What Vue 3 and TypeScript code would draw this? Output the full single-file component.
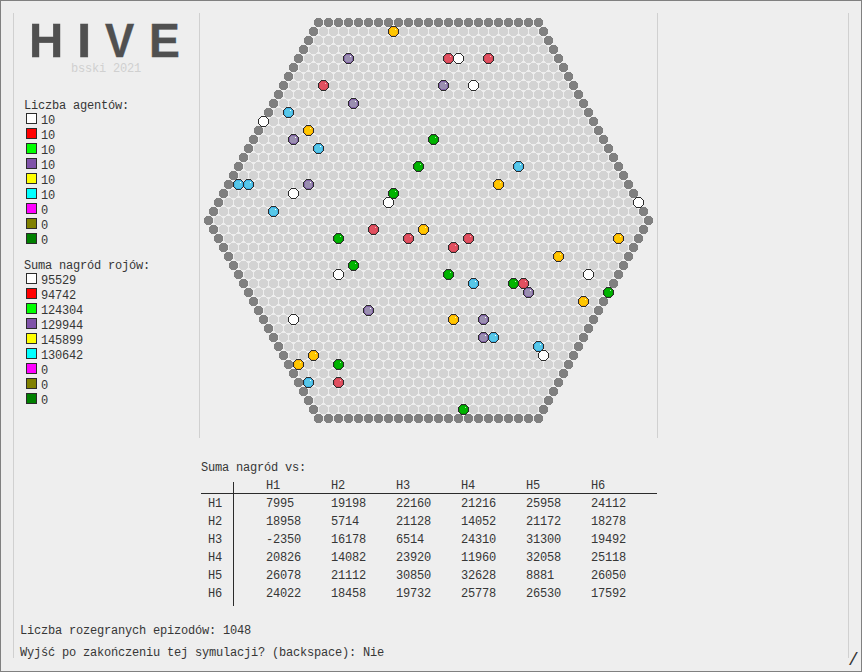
<script setup lang="ts">
interface Swarm {
  color: string
  agents: number
  reward: number
}

interface AgentGroup {
  fill: string
  rim: string
  shine: string
  cells: [number, number][]
}

const swarms: Swarm[] = [
  { color: '#ffffff', agents: 10, reward: 95529 },
  { color: '#ff0000', agents: 10, reward: 94742 },
  { color: '#00ff00', agents: 10, reward: 124304 },
  { color: '#7f52a8', agents: 10, reward: 129944 },
  { color: '#ffff00', agents: 10, reward: 145899 },
  { color: '#00ffff', agents: 10, reward: 130642 },
  { color: '#ff00ff', agents: 0, reward: 0 },
  { color: '#808000', agents: 0, reward: 0 },
  { color: '#008000', agents: 0, reward: 0 },
]

const names = ['H1', 'H2', 'H3', 'H4', 'H5', 'H6']
const matrix: number[][] = [
  [7995, 19198, 22160, 21216, 25958, 24112],
  [18958, 5714, 21128, 14052, 21172, 18278],
  [-2350, 16178, 6514, 24310, 31300, 19492],
  [20826, 14082, 23920, 11960, 32058, 25118],
  [26078, 21112, 30850, 32628, 8881, 26050],
  [24022, 18458, 19732, 25778, 26530, 17592],
]

// The board is a hexagon with 23 cells on each side: 45 rows, 10px by 9px pitch.
const side = 22
const floor: { x: number; y: number }[] = []
const walls: { x: number; y: number }[] = []
for (let row = 0; row <= side * 2; row++) {
  const grow = side - Math.abs(side - row)
  const count = side + 1 + grow
  for (let i = 0; i < count; i++) {
    const cell = { x: 318 - grow * 5 + i * 10, y: 22 + row * 9 }
    const edge = row === 0 || row === side * 2 || i === 0 || i === count - 1
    ;(edge ? walls : floor).push(cell)
  }
}

const groups: AgentGroup[] = [
  { fill: '#ffffff', rim: '#ffffff', shine: '#ffffff', cells: [[458, 58], [473, 85], [263, 121], [293, 193], [388, 202], [638, 202], [338, 274], [588, 274], [293, 319], [543, 355]] },
  { fill: '#e05060', rim: '#d04454', shine: '#f8b8c0', cells: [[448, 58], [488, 58], [323, 85], [373, 229], [408, 238], [468, 238], [453, 247], [523, 283], [338, 382]] },
  { fill: '#00b400', rim: '#009c00', shine: '#b0f0b0', cells: [[433, 139], [418, 166], [393, 193], [338, 238], [353, 265], [448, 274], [513, 283], [608, 292], [338, 364], [463, 409]] },
  { fill: '#9a8fb0', rim: '#8060a4', shine: '#ffffff', cells: [[348, 58], [443, 85], [353, 103], [293, 139], [308, 184], [528, 292], [368, 310], [483, 319], [483, 337]] },
  { fill: '#ffc800', rim: '#f8ac00', shine: '#fff4b0', cells: [[393, 31], [308, 130], [498, 184], [423, 229], [618, 238], [558, 256], [583, 301], [453, 319], [313, 355], [298, 364]] },
  { fill: '#58c8e8', rim: '#3cb0e4', shine: '#ffffff', cells: [[288, 112], [318, 148], [518, 166], [238, 184], [248, 184], [273, 211], [473, 283], [493, 337], [538, 346], [308, 382]] },
]
</script>

<template>
  <div class="window">
    <main class="frame">
      <aside class="sidebar">
        <header class="brand">
          <h1><span class="h">H</span><span class="i">I</span><span class="v">V</span><span class="e">E</span></h1>
          <p>bsski 2021</p>
        </header>
        <section class="legend">
          <h2>Liczba agentów:</h2>
          <ul>
            <li v-for="s in swarms" :key="s.color">
              <i :style="{ background: s.color }"></i><span>{{ s.agents }}</span>
            </li>
          </ul>
        </section>
        <section class="legend">
          <h2>Suma nagród rojów:</h2>
          <ul>
            <li v-for="s in swarms" :key="s.color">
              <i :style="{ background: s.color }"></i><span>{{ s.reward }}</span>
            </li>
          </ul>
        </section>
      </aside>
      <div class="center">
        <svg class="board" viewBox="199 13 459 425" shape-rendering="crispEdges">
          <defs>
            <path id="cell" d="M-2-4h5v1h1v1h1v5h-1v1h-1v1h-5v-1h-1v-1h-1v-5h1v-1h1z" />
            <path id="ring" d="M-2-5h5v1h1v1h1v1h1v5h-1v1h-1v1h-1v1h-5v-1h-1v-1h-1v-1h-1v-5h1v-1h1v-1h1z" />
            <path id="core" d="M-2-3h5v1h1v5h-1v1h-5v-1h-1v-5h1z" />
          </defs>
          <use v-for="c in floor" :key="`f${c.x}-${c.y}`" href="#cell" :x="c.x" :y="c.y" fill="#d3d3d3" />
          <use v-for="c in walls" :key="`w${c.x}-${c.y}`" href="#cell" :x="c.x" :y="c.y" fill="#808080" />
          <g v-for="g in groups" :key="g.fill">
            <g v-for="[x, y] in g.cells" :key="`${x}-${y}`" :transform="`translate(${x} ${y})`">
              <use href="#ring" fill="#2b2b2b" />
              <use href="#cell" :fill="g.rim" />
              <use href="#core" :fill="g.fill" />
              <rect x="2" y="-2" width="1" height="1" :fill="g.shine" />
            </g>
          </g>
        </svg>
        <section class="versus">
          <h2>Suma nagród vs:</h2>
          <div class="table">
            <div class="row head">
              <b></b>
              <span v-for="n in names" :key="n">{{ n }}</span>
            </div>
            <div v-for="(r, i) in matrix" :key="i" class="row">
              <b>{{ names[i] }}</b>
              <span v-for="(v, j) in r" :key="j">{{ v }}</span>
            </div>
          </div>
        </section>
      </div>
      <footer class="status">
        <p>Liczba rozegranych epizodów: 1048</p>
        <p>Wyjść po zakończeniu tej symulacji? (backspace): Nie</p>
      </footer>
    </main>
    <span class="spinner">/</span>
  </div>
</template>

<style>
body {
  margin: 0;
  overflow: hidden;
}
</style>

<style scoped>
.window {
  position: relative;
  box-sizing: border-box;
  width: 862px;
  height: 672px;
  padding: 12px;
  border: 1px solid #808080;
  background: #eeeeee;
  color: #363636;
  font: 12px/18px 'Liberation Mono', monospace;
  letter-spacing: -0.2px;
}
h1, h2, p, ul {
  margin: 0;
  padding: 0;
  font-weight: normal;
  font-size: inherit;
  list-style: none;
}
.frame {
  box-sizing: border-box;
  width: 836px;
  height: 645px;
  border: solid #d0d0d0;
  border-width: 0 1px;
  display: grid;
  grid-template-columns: 185px 459px;
  grid-template-rows: 609px 36px;
}
.brand {
  height: 84px;
}
.brand h1 {
  display: flex;
  height: 56px;
  padding-left: 15.4px;
  font: bold 49px/55px 'Liberation Sans', sans-serif;
  letter-spacing: 0;
  color: #505050;
  -webkit-text-stroke: 0.4px #505050;
}
.brand h1 span {
  display: block;
  transform-origin: left;
}
.brand .h {
  width: 47.7px;
  transform: scaleX(0.967);
}
.brand .i {
  width: 27.6px;
  transform: scaleX(1.05);
}
.brand .v {
  width: 44.5px;
  transform: scaleX(0.894);
}
.brand .e {
  width: 34px;
  transform: scaleX(0.944);
}
.brand p {
  padding-left: 57px;
  line-height: 14px;
  margin-top: -7px;
  color: #d0d0d0;
}
.legend {
  height: 160px;
  padding-left: 10px;
}
.legend h2 {
  height: 17px;
}
.legend li {
  display: flex;
  height: 15px;
}
.legend i {
  box-sizing: border-box;
  width: 11px;
  height: 11px;
  margin: -1px 4px 0 2px;
  border: 1px solid #2b2b2b;
}
.legend span {
  line-height: 14px;
}
.board {
  display: block;
  box-sizing: border-box;
  width: 459px;
  height: 425px;
  box-shadow: inset 1px 0 #d0d0d0, inset -1px 0 #d0d0d0;
}
.versus {
  padding: 21px 0 0 2px;
}
.table {
  width: 456px;
}
.row {
  display: grid;
  grid-template-columns: 33px repeat(6, 65px);
  height: 18px;
  line-height: 20px;
}
.row b {
  box-sizing: border-box;
  height: 18px;
  padding-left: 7px;
  border-right: 1px solid #2b2b2b;
  font-weight: normal;
}
.row:last-child b {
  height: 22px;
}
.row span {
  padding-left: 32px;
  white-space: nowrap;
}
.row.head {
  height: 16px;
  line-height: 18px;
  border-bottom: 1px solid #2b2b2b;
}
.row.head b {
  height: 11px;
  margin-top: 5px;
}
.status {
  grid-column: 1 / 3;
  padding-left: 6px;
}
.status p {
  height: 22px;
}
.spinner {
  position: absolute;
  left: 847px;
  top: 648px;
  font-size: 18px;
  line-height: 22px;
}
</style>
